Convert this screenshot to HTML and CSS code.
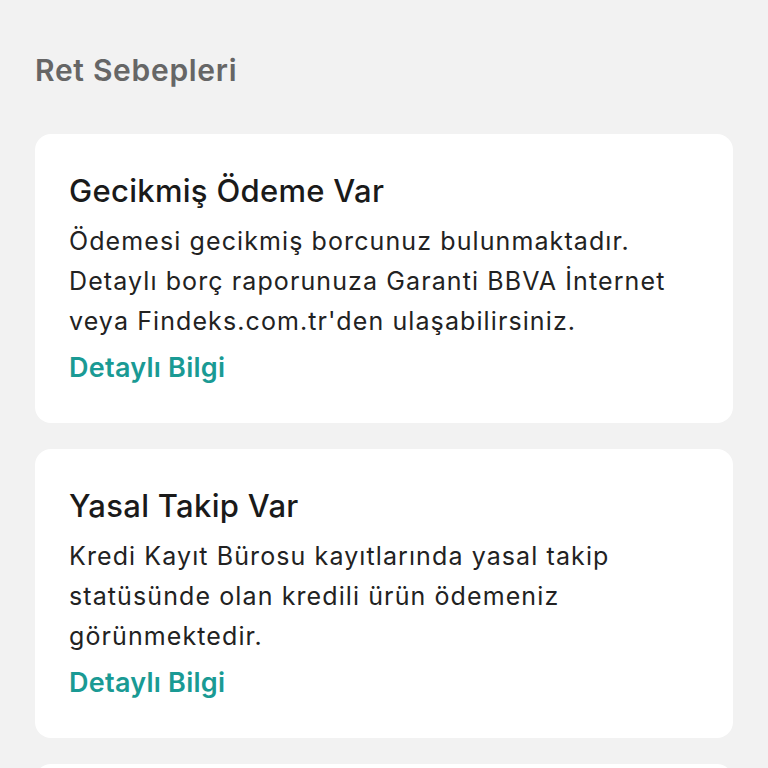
FILE: index.html
```html
<!DOCTYPE html>
<html lang="tr">
<head>
  <meta charset="UTF-8" />
  <meta name="viewport" content="width=device-width, initial-scale=1.0" />
  <title>Ret Sebepleri</title>
  <link rel="stylesheet" href="styles.css">
</head>
<body>

<div class="page">
  <h2 class="section-title">Ret Sebepleri</h2>

  <div class="card">
    <h3>Gecikmiş Ödeme Var</h3>
    <p>Ödemesi gecikmiş borcunuz bulunmaktadır.<br>Detaylı borç raporunuza Garanti BBVA İnternet<br>veya Findeks.com.tr'den ulaşabilirsiniz.</p>
    <a class="link" href="#">Detaylı Bilgi</a>
  </div>

  <div class="card">
    <h3>Yasal Takip Var</h3>
    <p>Kredi Kayıt Bürosu kayıtlarında yasal takip<br>statüsünde olan kredili ürün ödemeniz<br>görünmektedir.</p>
    <a class="link" href="#">Detaylı Bilgi</a>
  </div>

  <!-- next card, only its top edge is in view -->
  <div class="card card-next"></div>
</div>

</body>
</html>
```

FILE: styles.css
```css
* { box-sizing: border-box; }
body {
  margin: 0;
  font-family: Inter, "Noto Sans", sans-serif;
  background: #f2f2f2;
  color: #1a1a1a;
  height: 768px;
  overflow: hidden;
}
.page {
  padding: 50px 35px 0 35px;
  display: flex;
  flex-direction: column;
  gap: 26px;
}
.section-title {
  margin: 0 0 18px 0;
  font-size: 30px;
  font-weight: 600;
  letter-spacing: 0.7px;
  color: #666;
  line-height: 40px;
}
.card {
  background: #fff;
  border-radius: 16px;
  padding: 37px 34px 35px 34px;
}
.card-next {
  height: 200px;
}
.card h3 {
  margin: 0 0 10px 0;
  font-size: 31px;
  font-weight: 500;
  letter-spacing: 0.3px;
  line-height: 40px;
  color: #1a1a1a;
}
.card p {
  margin: 0;
  font-size: 25px;
  letter-spacing: 1.1px;
  line-height: 40px;
  color: #222;
}
.link {
  display: inline-block;
  margin-top: 7px;
  font-size: 27px;
  font-weight: 600;
  letter-spacing: 0.25px;
  line-height: 40px;
  color: #1a9a94;
  text-decoration: none;
}
```
